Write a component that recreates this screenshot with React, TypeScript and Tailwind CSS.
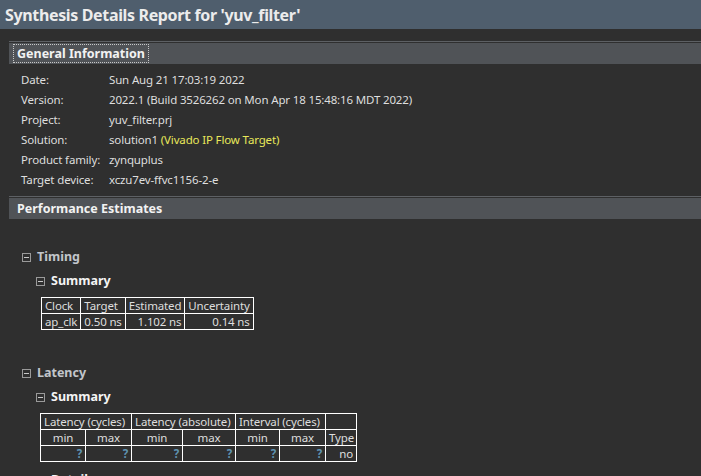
import React from 'react';

const font = { fontFamily: '"Noto Sans", "Open Sans", sans-serif' };

const info: Array<{ label: string; value: React.ReactNode }> = [
  { label: 'Date:', value: 'Sun Aug 21 17:03:19 2022' },
  { label: 'Version:', value: '2022.1 (Build 3526262 on Mon Apr 18 15:48:16 MDT 2022)' },
  { label: 'Project:', value: 'yuv_filter.prj' },
  {
    label: 'Solution:',
    value: (
      <>
        solution1 <span className="text-[#e8e85a]">(Vivado IP Flow Target)</span>
      </>
    ),
  },
  { label: 'Product family:', value: 'zynquplus' },
  { label: 'Target device:', value: 'xczu7ev-ffvc1156-2-e' },
];

function SectionBar({ title, focused = false }: { title: string; focused?: boolean }) {
  return (
    <div className="ml-[9px] border-t border-[#5d6064] pt-px">
      <div className="h-[21px] bg-[#505357] flex items-center pl-[5px]">
        <span
          className={`text-[12.5px] font-bold text-[#f2f2f2] leading-[17px] px-[3px] ${
            focused ? 'outline outline-1 outline-dotted outline-[#c8c8c8]' : ''
          }`}
        >
          {title}
        </span>
      </div>
    </div>
  );
}

function Toggle({ label, indent, grey = false }: { label: string; indent: string; grey?: boolean }) {
  return (
    <div className={`h-[20px] flex items-center ${indent}`}>
      <span className="w-[9px] h-[9px] border border-[#9a9a9a] flex items-center justify-center mr-[6px]">
        <span className="w-[5px] h-px bg-[#c8c8c8]" />
      </span>
      <span className={`text-[12.5px] font-bold ${grey ? 'text-[#c2c6cb]' : 'text-[#f4f4f4]'}`}>{label}</span>
    </div>
  );
}

const td = 'border border-white h-[16px] px-[3px] py-0 leading-[14px] whitespace-nowrap overflow-hidden';
const q = <span className="text-[#5f92b0] font-bold">?</span>;

export default function App() {
  return (
    <div className="w-[701px] h-[476px] overflow-hidden bg-[#2f2f2f] text-[#dedede]" style={font}>
      <div className="h-[29px] bg-[#4f5e6d] flex items-center pl-[5px]">
        <span className="text-[16px] font-bold text-[#ececec] tracking-[-0.35px]">
          Synthesis Details Report for 'yuv_filter'
        </span>
      </div>

      <div className="mt-[12px]">
        <SectionBar title="General Information" focused />
      </div>

      <div className="pt-[6px] pl-[21px] text-[11.5px] tracking-[-0.15px]">
        {info.map((row) => (
          <div key={row.label} className="h-[20px] flex items-center">
            <span className="w-[88px] shrink-0">{row.label}</span>
            <span>{row.value}</span>
          </div>
        ))}
      </div>

      <div className="mt-[6px]">
        <SectionBar title="Performance Estimates" />
      </div>

      <div className="mt-[28px]">
        <Toggle label="Timing" indent="pl-[22px]" grey />
        <Toggle label="Summary" indent="pl-[36px] mt-[4px]" />
        <table className="ml-[41px] mt-[6px] border-collapse text-[11.5px] tracking-[-0.15px]">
          <tbody>
            <tr>
              <td className={td}>Clock</td>
              <td className={td}>Target</td>
              <td className={td}>Estimated</td>
              <td className={td}>Uncertainty</td>
            </tr>
            <tr>
              <td className={td}>ap_clk</td>
              <td className={td}>0.50 ns</td>
              <td className={`${td} text-right`}>1.102 ns</td>
              <td className={`${td} text-right`}>0.14 ns</td>
            </tr>
          </tbody>
        </table>
      </div>

      <div className="mt-[33px]">
        <Toggle label="Latency" indent="pl-[22px]" grey />
        <Toggle label="Summary" indent="pl-[36px] mt-[4px]" />
        <table className="ml-[40px] mt-[6px] border-collapse table-fixed w-[316px] text-[11.5px] tracking-[-0.15px]">
          <colgroup>
            <col className="w-[45px]" />
            <col className="w-[46px]" />
            <col className="w-[51px]" />
            <col className="w-[53px]" />
            <col className="w-[44px]" />
            <col className="w-[46px]" />
            <col className="w-[31px]" />
          </colgroup>
          <tbody>
            <tr>
              <td className={td} colSpan={2}>Latency (cycles)</td>
              <td className={td} colSpan={2}>Latency (absolute)</td>
              <td className={td} colSpan={2}>Interval (cycles)</td>
              <td className={td} />
            </tr>
            <tr>
              <td className={`${td} text-center`}>min</td>
              <td className={`${td} text-center`}>max</td>
              <td className={`${td} text-center`}>min</td>
              <td className={`${td} text-center`}>max</td>
              <td className={`${td} text-center`}>min</td>
              <td className={`${td} text-center`}>max</td>
              <td className={`${td} px-[2px]`}>Type</td>
            </tr>
            <tr>
              <td className={`${td} text-right`}>{q}</td>
              <td className={`${td} text-right`}>{q}</td>
              <td className={`${td} text-right`}>{q}</td>
              <td className={`${td} text-right`}>{q}</td>
              <td className={`${td} text-right`}>{q}</td>
              <td className={`${td} text-right`}>{q}</td>
              <td className={`${td} text-right`}>no</td>
            </tr>
          </tbody>
        </table>
        <Toggle label="Detail" indent="pl-[36px] mt-[8px]" />
      </div>
    </div>
  );
}
